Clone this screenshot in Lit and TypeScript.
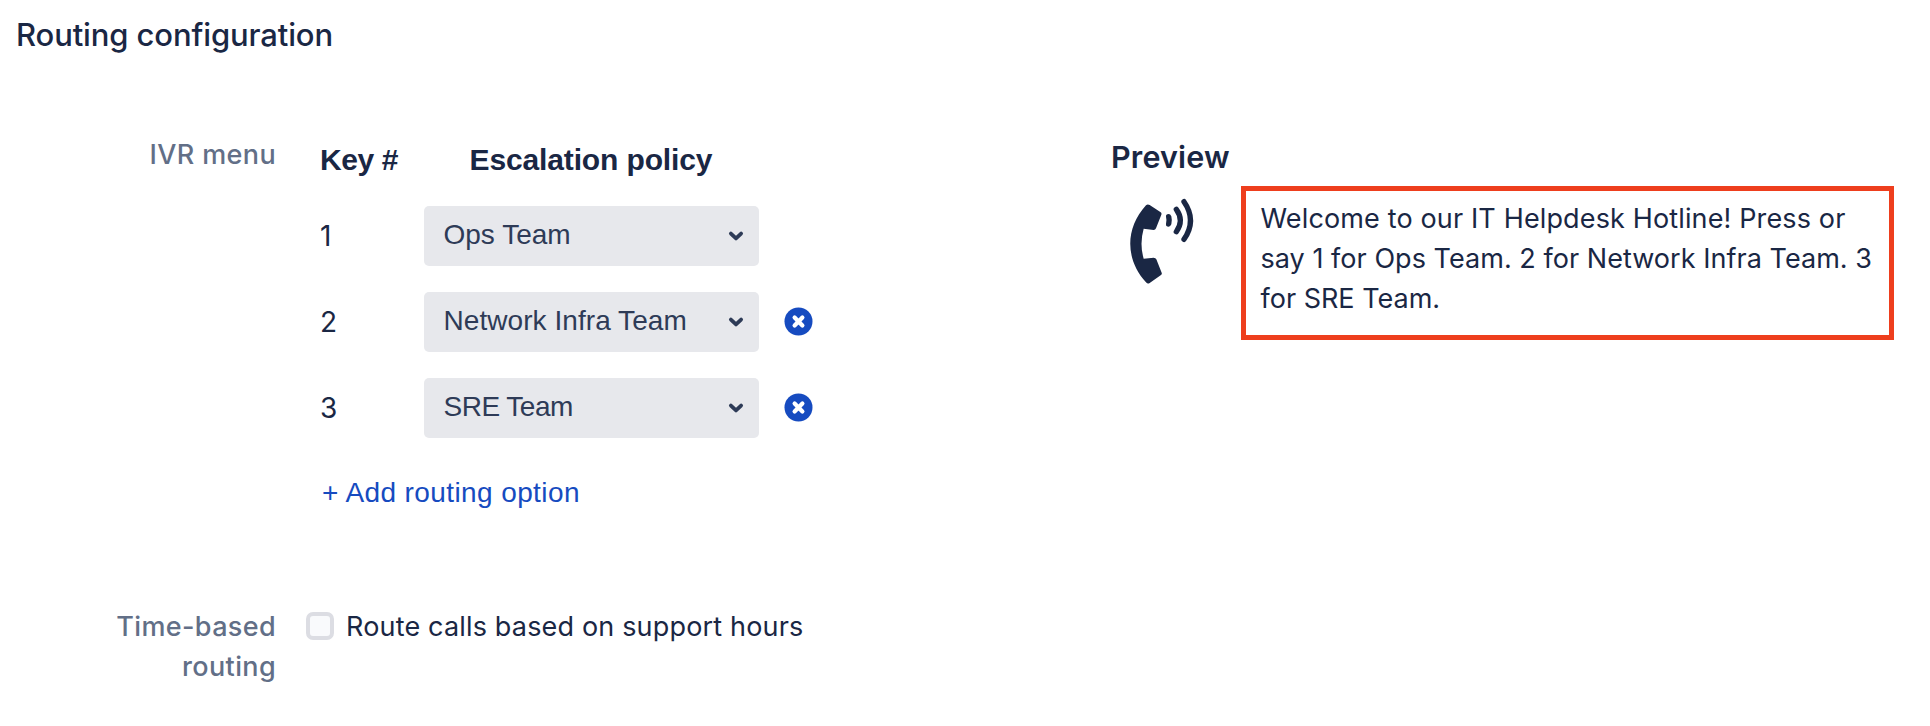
import { LitElement, html, css, nothing } from "lit";
import { customElement, property, state } from "lit/decorators.js";

@customElement("policy-row")
class PolicyRow extends LitElement {
  @property() key = "";
  @property() policy = "";
  @property({ type: Boolean }) removable = false;

  static styles = css`
    :host { display: flex; align-items: center; height: 60px; font-family: "Liberation Sans", Arial, sans-serif; }
    .key { width: 104px; height: 60px; font-family: Inter, sans-serif; font-size: 28px; line-height: 60px; color: #1a2744; }
    .select {
      box-sizing: border-box; width: 335px; height: 60px; border-radius: 5px; background: #e7e8ec;
      display: flex; align-items: center; justify-content: space-between; padding: 0 13px 0 19.5px;
      font-size: 28px; color: #2e3b57;
    }
    .value { line-height: 58px; padding-bottom: 2px; white-space: nowrap; }
    .value.wide { letter-spacing: 0.06px; }
    .value.tight { letter-spacing: -0.5px; }
    .remove { margin-left: 25px; margin-bottom: 1px; border: 0; padding: 0; background: none; width: 29px; height: 29px; }
    svg { display: block; }
  `;

  render() {
    const spacing = this.policy === "SRE Team" ? "tight" : this.policy.length > 12 ? "wide" : "";
    return html`
      <span class="key">${this.key}</span>
      <div class="select">
        <span class="value ${spacing}">${this.policy}</span>
        <svg width="20" height="18" viewBox="0 0 20 18" fill="none" stroke="#2e3b57" stroke-width="3.8" stroke-linecap="round" stroke-linejoin="round">
          <path d="M4.9 6.6 10 11.4 15.1 6.6" />
        </svg>
      </div>
      ${this.removable
        ? html`<button class="remove" aria-label="Remove">
            <svg width="29" height="29" viewBox="0 0 29 29">
              <circle cx="14.5" cy="14.5" r="14" fill="#164bc0" />
              <path d="M10.6 10.5l7.8 8M18.4 10.5l-7.8 8" stroke="#fff" stroke-width="4.2" stroke-linecap="round" />
            </svg>
          </button>`
        : nothing}
    `;
  }
}

@customElement("app-root")
class AppRoot extends LitElement {
  @state() private rows = [
    { key: "1", policy: "Ops Team" },
    { key: "2", policy: "Network Infra Team" },
    { key: "3", policy: "SRE Team" },
  ];

  static styles = css`
    :host { display: block; min-height: 726px; box-sizing: border-box; padding: 15px 36px 0 16px; background: #fff; color: #1a2744; font-family: Inter, sans-serif; }
    h1 { margin: 0 0 79px; font-size: 31px; font-weight: 500; line-height: 40px; letter-spacing: -0.12px; }
    .ivr { display: flex; align-items: flex-start; }
    .label { width: 260px; padding-top: 1px; text-align: right; font-size: 27px; font-weight: 500; line-height: 40px; letter-spacing: 0.36px; color: #626f87; }
    .menu { width: 790px; padding: 6px 0 0 44px; box-sizing: border-box; font-family: "Liberation Sans", Arial, sans-serif; }
    .head { display: flex; font-size: 30px; font-weight: 700; line-height: 40px; margin-bottom: 26px; }
    .head-key { width: 149.5px; letter-spacing: -0.4px; }
    .head-policy { letter-spacing: -0.13px; }
    .rows { display: flex; flex-direction: column; gap: 26px; }
    .add { display: block; margin: 35px 0 0 2px; font-size: 28px; line-height: 40px; letter-spacing: 0.4px; color: #164bc0; text-decoration: none; }
    .preview { padding: 3px 0 0 44px; }
    h2 { margin: 0 0 9px 1px; font-size: 30.5px; font-weight: 600; line-height: 40px; letter-spacing: 0.15px; }
    .message-row { display: flex; align-items: flex-start; }
    .phone { display: block; margin: 4.5px 31px 0 10px; }
    .message { box-sizing: border-box; width: 653px; height: 154px; border: 5px solid #ee3e1d; padding: 8px 0 0 14.5px; font-size: 27px; line-height: 40px; }
    .line { white-space: nowrap; }
    .line:nth-child(1) { letter-spacing: 0.14px; }
    .line:nth-child(2) { letter-spacing: 0.04px; }
    .time { display: flex; align-items: flex-start; margin-top: 93px; }
    .option { display: flex; align-items: center; height: 40px; margin-left: 30px; gap: 12px; font-size: 27px; line-height: 40px; letter-spacing: 0.17px; white-space: nowrap; }
    .text { padding-top: 2px; }
    .box { box-sizing: border-box; width: 28px; height: 28px; border: 4px solid #dcdde3; border-radius: 7px; background: #f9fafc; }
  `;

  render() {
    return html`
      <h1>Routing configuration</h1>
      <section class="ivr">
        <div class="label">IVR menu</div>
        <div class="menu">
          <div class="head"><span class="head-key">Key #</span><span class="head-policy">Escalation policy</span></div>
          <div class="rows">
            ${this.rows.map((r, i) => html`<policy-row .key=${r.key} .policy=${r.policy} ?removable=${i > 0}></policy-row>`)}
          </div>
          <a class="add">+ Add routing option</a>
        </div>
        <div class="preview">
          <h2>Preview</h2>
          <div class="message-row">
            <svg class="phone" width="90" height="100" viewBox="0 0 270 300">
              <g fill="#1a2744">
                <path d="M78 43Q83 38 89 42L121 63Q126 66 124 71L108 112Q106 117 101 117L71 113Q58 158 71 203L101 200Q107 200 109 205L125 245Q127 250 122 253L89 276Q83 280 78 274C15 205 15 112 78 43Z" />
                <path d="M138 77Q137 69 146 69Q151 69 154 76Q157 88 154 100Q151 107 146 107Q137 107 138 99Q141 88 138 77Z" />
              </g>
              <g fill="none" stroke="#1a2744" stroke-width="16" stroke-linecap="round">
                <path d="M169 55Q193 88 169 122" />
                <path d="M192 32Q231 88 192 145" />
              </g>
            </svg>
            <div class="message">
              <div class="line">Welcome to our IT Helpdesk Hotline! Press or</div>
              <div class="line">say 1 for Ops Team. 2 for Network Infra Team. 3</div>
              <div class="line">for SRE Team.</div>
            </div>
          </div>
        </div>
      </section>
      <section class="time">
        <div class="label">Time-based<br />routing</div>
        <label class="option"><span class="box"></span><span class="text">Route calls based on support hours</span></label>
      </section>
    `;
  }
}
